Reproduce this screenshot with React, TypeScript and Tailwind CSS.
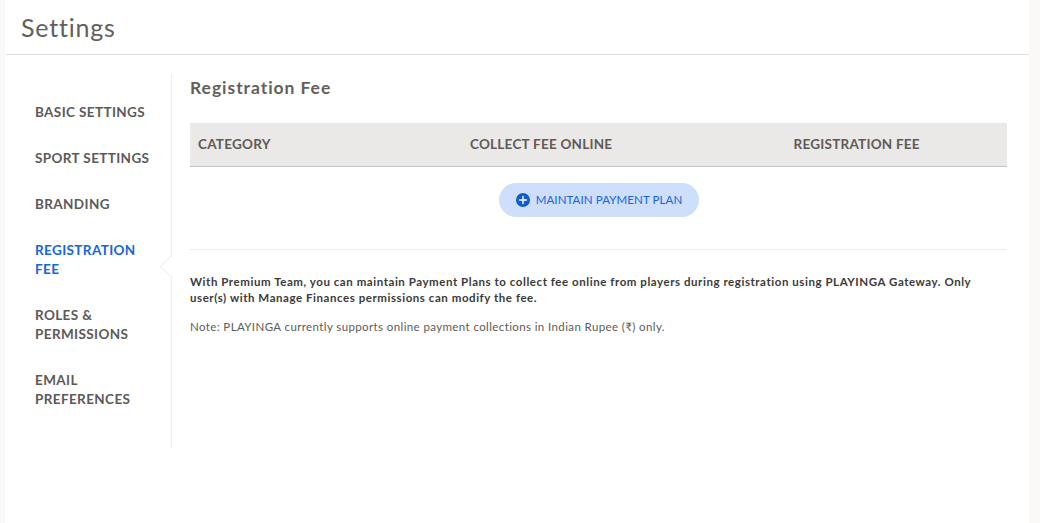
import React from "react";

function NavItem({ lines, active }: { lines: string; active?: boolean }) {
  return (
    <a className={`block text-[13.5px] leading-[19px] font-bold tracking-[0.38px] ${active ? "text-[#1565e0]" : "text-[#5c5a58]"}`}>
      {lines}
    </a>
  );
}

export default function App() {
  return (
    <div className="h-[523px] w-[1040px] overflow-hidden bg-[#faf9f7] font-['Lato','Liberation_Sans',sans-serif]">
      <div className="ml-[5px] flex h-[523px] w-[1024px] flex-col bg-white">
        <header className="ml-[1px] flex h-[55px] items-start border-b border-[#dcdcdc] pl-[15px] pt-[11px]">
          <h1 className="text-[25px] leading-[32px] font-normal tracking-[0.78px] text-[#645f5a]">Settings</h1>
        </header>
        <div className="ml-[1px] flex pt-[19px]">
          <nav className="relative flex h-[374px] w-[166px] flex-col gap-[27px] border-r border-[#f0eee9] pl-[29px] pr-[12px] pt-[29px]">
            <NavItem lines="BASIC SETTINGS" />
            <NavItem lines="SPORT SETTINGS" />
            <NavItem lines="BRANDING" />
            <NavItem lines="REGISTRATION FEE" active />
            <NavItem lines="ROLES & PERMISSIONS" />
            <NavItem lines="EMAIL PREFERENCES" />
            <span className="absolute right-[-7px] top-[185px] h-[15px] w-[15px] rotate-45 border-b border-l border-[#f0eee9] bg-white" />
          </nav>
          <main className="ml-[18px] w-[817px]">
            <h2 className="text-[17.5px] leading-[28px] font-bold tracking-[0.95px] text-[#645f5a]">Registration Fee</h2>
            <div className="mt-[21px] flex h-[44px] items-center border-b border-[#c4c4c4] bg-[#ebe9e7] text-[13.5px] font-bold tracking-[0.24px] text-[#5f5a56]">
              <div className="w-[280px] pl-[8px]">CATEGORY</div>
              <div className="w-[323.5px]">COLLECT FEE ONLINE</div>
              <div>REGISTRATION FEE</div>
            </div>
            <div className="flex justify-center border-b border-[#efede8] pb-[32px] pl-[1px] pt-[16px]">
              <button className="flex h-[34px] w-[200px] items-center justify-center gap-[6px] rounded-full bg-[#cddffa] text-[11.5px] tracking-[0.1px] text-[#1565e0]">
                <svg width="14" height="14" viewBox="0 0 14 14" aria-hidden="true">
                  <circle cx="7" cy="7" r="7" fill="#1259d6" />
                  <path d="M7 3.5v7M3.5 7h7" stroke="#fff" strokeWidth="1.4" strokeLinecap="round" />
                </svg>
                MAINTAIN PAYMENT PLAN
              </button>
            </div>
            <p className="mt-[24px] text-[11.5px] leading-[16px] font-bold tracking-[0.555px] text-[#3c3a38]">
              With Premium Team, you can maintain Payment Plans to collect fee online from players during registration using PLAYINGA Gateway. Only user(s) with Manage Finances permissions can modify the fee.
            </p>
            <p className="mt-[13px] text-[11.5px] leading-[16px] tracking-[0.39px] text-[#5d5b59]">
              Note: PLAYINGA currently supports online payment collections in Indian Rupee (₹) only.
            </p>
          </main>
        </div>
      </div>
    </div>
  );
}
